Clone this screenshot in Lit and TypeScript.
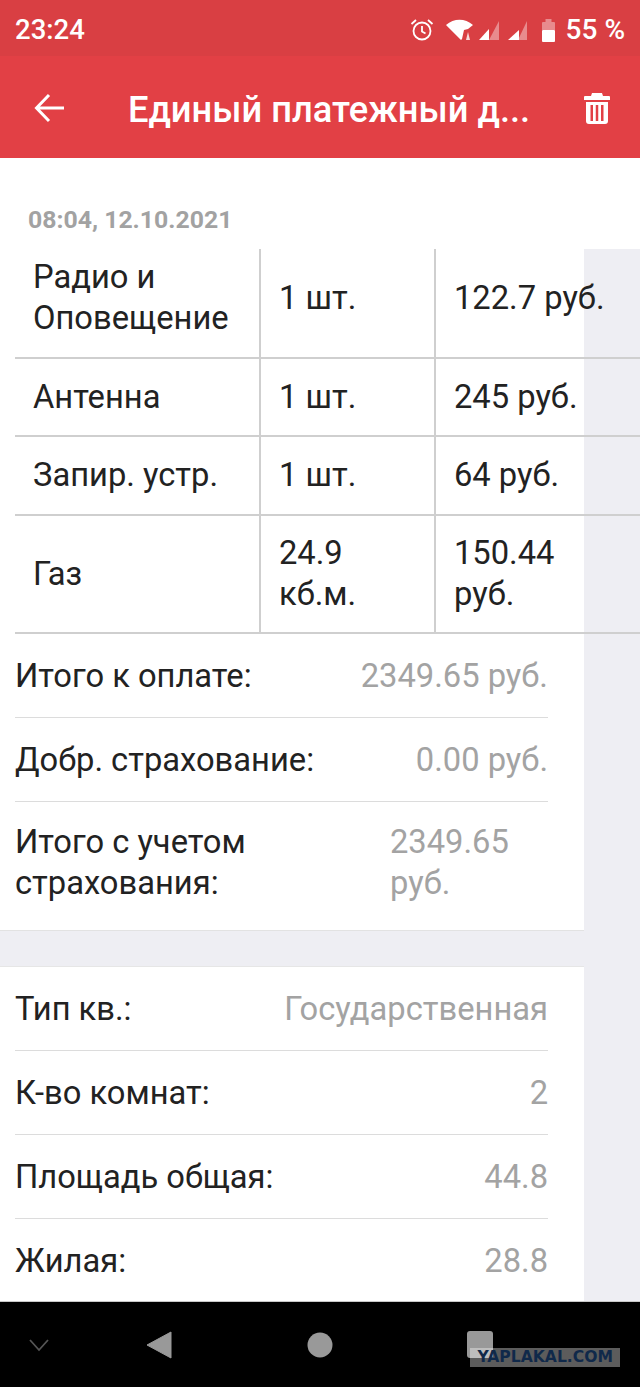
import { LitElement, html, css } from "lit"
import { customElement } from "lit/decorators.js"

const tableRows = [
  ["Радио и Оповещение", "1 шт.", "122.7 руб.", 120],
  ["Антенна", "1 шт.", "245 руб.", 78],
  ["Запир. устр.", "1 шт.", "64 руб.", 79],
  ["Газ", "24.9 кб.м.", "150.44 руб.", 118],
] as const

const totals = [
  ["Итого к оплате:", "2349.65 руб."],
  ["Добр. страхование:", "0.00 руб."],
]

const flat = [
  ["Тип кв.:", "Государственная"],
  ["К-во комнат:", "2"],
  ["Площадь общая:", "44.8"],
  ["Жилая:", "28.8"],
]

@customElement("app-root")
export class AppRoot extends LitElement {
  static styles = css`
    :host {
      display: flex;
      flex-direction: column;
      position: relative;
      width: 640px;
      height: 1387px;
      overflow: hidden;
      background: #eeeef3;
      font-family: Roboto, "Noto Sans", sans-serif;
      font-size: 32.7px;
      line-height: 41px;
      color: #222;
    }

    .status {
      flex: none;
      height: 56px;
      background: #d93f43;
      color: #fff;
      display: flex;
      align-items: center;
      box-sizing: border-box;
      padding: 3px 15px 0;
      font-size: 27.5px;
      font-weight: 500;
    }
    .status .time { flex: 1; }
    .status .icons { display: flex; align-items: center; }
    .status .pct { font-size: 28px; margin-left: 10px; }
    .alarm { margin-right: 10px; }
    .wifi { margin-right: 2px; }
    .sig { margin-right: 3px; }
    .sig2 { margin-right: 13px; }

    .bar {
      flex: none;
      height: 102px;
      background: #e24045;
      color: #fff;
      display: flex;
      align-items: center;
      box-sizing: border-box;
      padding: 2px 30px 0 34px;
    }
    .bar .title {
      flex: 1;
      margin-left: 64px;
      padding-top: 2px;
      font-size: 36.3px;
      font-weight: 500;
      white-space: nowrap;
    }

    .head {
      flex: none;
      height: 91px;
      background: #fff;
      box-sizing: border-box;
      padding: 46px 0 0 28px;
      font-size: 24.8px;
      line-height: 32px;
      font-weight: 700;
      color: #a2a2a2;
    }

    .main { flex: 1; min-height: 0; overflow: hidden; }

    .card {
      width: 584px;
      background: #fff;
      box-sizing: border-box;
    }
    .card.first { height: 692px; border-bottom: 1px solid #e2e2e2; }
    .card.second { margin-top: 35px; border-top: 1px solid #e6e6e6; }

    .table { width: 625px; margin: -10px 0 0 15px; }
    .tr {
      display: grid;
      grid-template-columns: 246px 175px 204px;
      box-sizing: border-box;
      border-bottom: 2px solid #cfcfcf;
    }
    .td {
      display: flex;
      align-items: center;
      box-sizing: border-box;
      padding: 0 18px;
      border-right: 2px solid #cfcfcf;
    }
    .td:last-child { border-right: none; padding-right: 24px; }

    .row {
      display: flex;
      align-items: center;
      justify-content: space-between;
      height: 84px;
      box-sizing: border-box;
      padding-top: 2px;
      margin: 0 36px 0 15px;
      border-bottom: 1px solid #dcdcdc;
    }
    .row.last { border-bottom: none; height: 130px; padding: 0 0 8px; }
    .row .val { color: #a3a3a3; }
    .row.last .label { width: 340px; }
    .row.last .val { width: 158px; }

    .nav {
      flex: none;
      height: 86px;
      background: #000;
      border-top: 1px solid #c8c8c8;
      box-sizing: border-box;
      display: grid;
      grid-template-columns: 78px 162px 160px 160px;
      align-items: center;
      justify-items: center;
    }

    .mark {
      position: absolute;
      left: 470px;
      top: 1348px;
      width: 150px;
      height: 19px;
      background: rgba(255, 255, 255, 0.36);
      color: #10294a;
      font-family: "DejaVu Sans", sans-serif;
      font-size: 15.6px;
      line-height: 19px;
      font-weight: 700;
      text-align: right;
      padding-right: 7px;
      box-sizing: border-box;
      white-space: nowrap;
    }
  `

  render() {
    return html`
      <div class="status">
        <span class="time">23:24</span>
        <div class="icons">
          <svg class="alarm" width="26" height="26" viewBox="0 0 26 26" fill="none" stroke="#fff" stroke-width="1.8">
            <circle cx="13" cy="14" r="8.5" />
            <path d="M13 9v5.5l3.5 2M2.5 7l4.5-4M23.5 7l-4.5-4" />
          </svg>
          <svg class="wifi" width="30" height="24" viewBox="0 0 30 24">
            <path fill="#fff" d="M1 7C9 0 20 0 28 7l-5 4-4 1-2 9-1 1z" />
            <path fill="#fff" opacity=".8" d="M23 14l2 8h-4z" />
          </svg>
          <svg class="sig" width="24" height="24" viewBox="0 0 24 24">
            <path fill="#fff" opacity=".4" d="M22 3v19H12z" />
            <path fill="#fff" d="M2 22 12 11v11z" />
          </svg>
          <svg class="sig2" width="24" height="24" viewBox="0 0 24 24">
            <path fill="#fff" opacity=".4" d="M23 3v19H14z" />
            <path fill="#fff" d="M4 22 15 12v10z" />
          </svg>
          <svg width="15" height="26" viewBox="0 0 15 26">
            <path fill="#fff" opacity=".4" d="M1 6a1 1 0 0 1 1-1h2.500V2h6v3H13a1 1 0 0 1 1 1v7H1z" />
            <rect fill="#fff" x="1" y="13" width="13" height="12" rx="1" />
          </svg>
          <span class="pct">55 %</span>
        </div>
      </div>

      <div class="bar">
        <svg width="30" height="30" viewBox="0 0 30 30" fill="none" stroke="#fff" stroke-width="3">
          <path d="M30 15H3M15 2 2.500 15 15 28" />
        </svg>
        <span class="title">Единый платежный д...</span>
        <svg width="26" height="31" viewBox="0 0 26 31" fill="#fff">
          <path d="M8 0h10l1 3h6a1 1 0 0 1 1 1v3H0V4a1 1 0 0 1 1-1h6z" />
          <path fill-rule="evenodd" d="M2 9h22v19a3 3 0 0 1-3 3H5a3 3 0 0 1-3-3zm4.500 3v16H9V12zm5.250 0v16h2.500V12zM17 12v16h2.500V12z" />
        </svg>
      </div>

      <div class="head">08:04, 12.10.2021</div>

      <div class="main">
        <div class="card first">
          <div class="table">
            ${tableRows.map(
              ([name, qty, price, h]) => html`
                <div class="tr" style="height:${h}px">
                  <div class="td">${name}</div>
                  <div class="td">${qty}</div>
                  <div class="td">${price}</div>
                </div>
              `
            )}
          </div>
          ${totals.map(
            ([label, val]) => html`
              <div class="row">
                <span class="label">${label}</span>
                <span class="val">${val}</span>
              </div>
            `
          )}
          <div class="row last">
            <span class="label">Итого с учетом страхования:</span>
            <span class="val">2349.65 руб.</span>
          </div>
        </div>

        <div class="card second">
          ${flat.map(
            ([label, val]) => html`
              <div class="row">
                <span class="label">${label}</span>
                <span class="val">${val}</span>
              </div>
            `
          )}
        </div>
      </div>

      <div class="nav">
        <svg width="22" height="14" viewBox="0 0 22 14" fill="none" stroke="#555" stroke-width="1.8">
          <path d="M2 2l9 10 9-10" />
        </svg>
        <svg width="26" height="28" viewBox="0 0 26 28" fill="#999">
          <path d="M25 1v26L1 14z" stroke="#999" stroke-linejoin="round" />
        </svg>
        <svg width="26" height="26" viewBox="0 0 26 26" fill="#999">
          <circle cx="13" cy="13" r="12.5" />
        </svg>
        <svg width="26" height="27" viewBox="0 0 26 27" fill="#999">
          <rect width="26" height="27" rx="3" />
        </svg>
      </div>

      <div class="mark">YAPLAKAL.COM</div>
    `
  }
}
